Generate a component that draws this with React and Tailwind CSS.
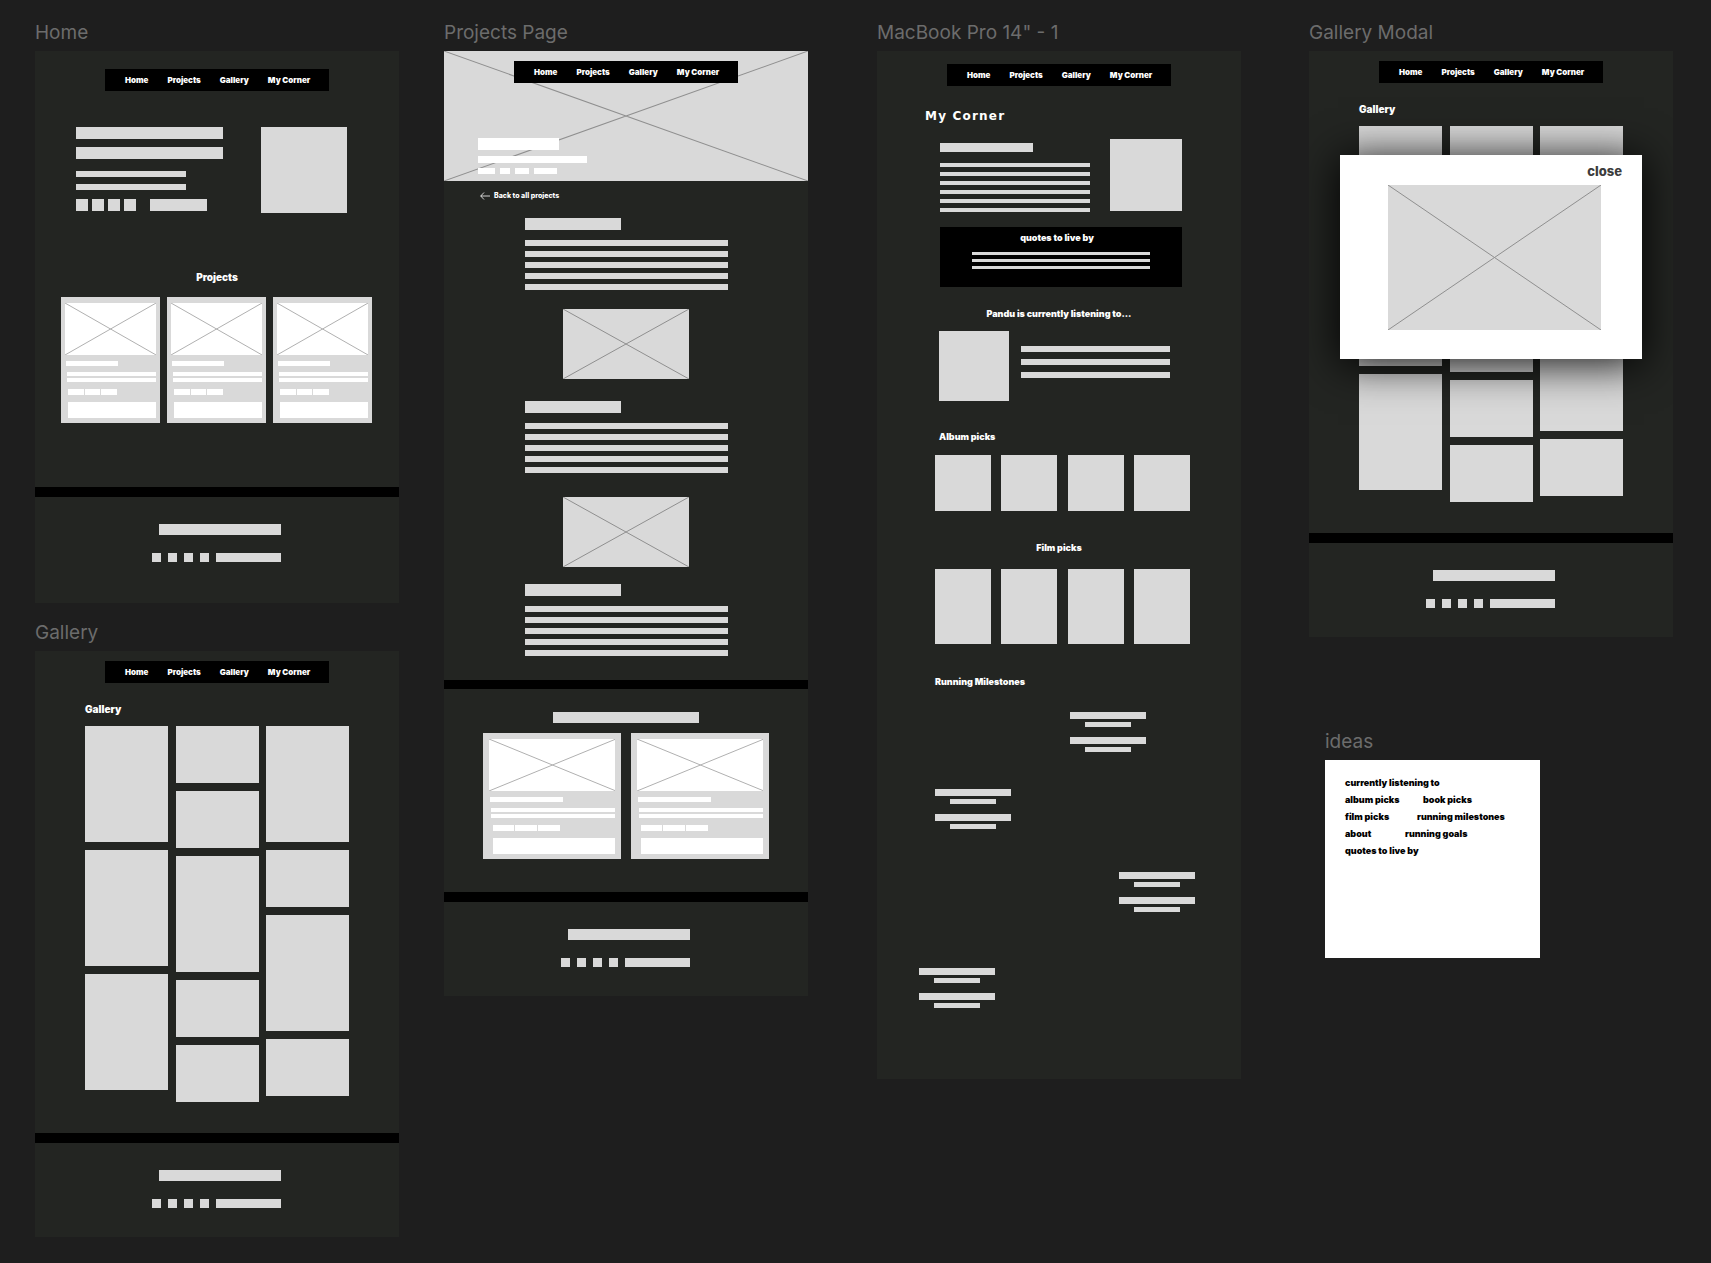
import React from 'react';

const navLinks = ['Home', 'Projects', 'Gallery', 'My Corner'];

const galleryColumns = [
  ['tall', 'tall', 'tall'],
  ['short', 'short', 'tall', 'short', 'short'],
  ['tall', 'short', 'tall', 'short'],
];

const ideaRows = [
  { first: 'currently listening to' },
  { first: 'album picks', second: 'book picks', width: 'w-[78px]' },
  { first: 'film picks', second: 'running milestones', width: 'w-[72px]' },
  { first: 'about', second: 'running goals', width: 'w-[60px]' },
  { first: 'quotes to live by' },
];

const Bar = ({ className }) => <div className={`bg-[#d9d9d9] ${className}`} />;

const Lines = ({ count, className, lineClass }) => (
  <div className={`flex flex-col ${className}`}>
    {Array.from({ length: count }, (_, i) => (
      <Bar key={i} className={lineClass} />
    ))}
  </div>
);

const Cross = ({ className }) => (
  <svg className={`block size-full ${className}`} viewBox="0 0 100 100" preserveAspectRatio="none" fill="none">
    <path d="M0 0L100 100M100 0L0 100" stroke="currentColor" strokeWidth="1" vectorEffect="non-scaling-stroke" />
  </svg>
);

const Label = ({ children }) => (
  <p className="mb-px font-['Inter'] text-[19px] leading-[34px] whitespace-nowrap text-[#6c6c6c]">{children}</p>
);

const Heading = ({ children, className = 'text-[9px]' }) => (
  <h2 className={`leading-4 font-black text-white ${className}`}>{children}</h2>
);

const Nav = () => (
  <nav className="relative mx-auto flex h-[22px] w-[224px] items-center gap-[19px] bg-black pl-5 text-[8px] leading-4 font-black whitespace-nowrap text-white">
    {navLinks.map((link) => (
      <a key={link} href="#">
        {link}
      </a>
    ))}
  </nav>
);

const ProjectCard = ({ className }) => (
  <div className={`flex h-[126px] flex-col bg-[#d9d9d9] pt-[6px] ${className}`}>
    <div className="mx-[4%] h-[52px] bg-white">
      <Cross className="text-[#b0b0b0]" />
    </div>
    <div className="mt-[6px] ml-[5%] h-[5px] w-[53%] bg-white" />
    <div className="mt-[6px] mr-[4%] ml-[6%] h-1 bg-white" />
    <div className="mt-[2px] mr-[4%] ml-[6%] h-1 bg-white" />
    <div className="mt-[7px] ml-[7%] flex gap-px">
      <div className="h-[6px] w-[17%] bg-white" />
      <div className="h-[6px] w-[17%] bg-white" />
      <div className="h-[6px] w-[17%] bg-white" />
    </div>
    <div className="mt-[7px] mr-[4%] ml-[7%] h-4 bg-white" />
  </div>
);

const Footer = () => (
  <footer className="border-t-10 border-black pt-[27px] pb-[29px]">
    <div className="mx-auto w-[130px] pr-px">
      <Bar className="ml-[7px] h-[11px]" />
      <div className="mt-[18px] flex gap-[7px]">
        <Bar className="size-[9px]" />
        <Bar className="size-[9px]" />
        <Bar className="size-[9px]" />
        <Bar className="size-[9px]" />
        <Bar className="h-[9px] flex-1" />
      </div>
    </div>
  </footer>
);

const HomeFrame = () => (
  <section>
    <Label>Home</Label>
    <div className="bg-[#232522] pt-[18px] pb-3">
      <Nav />
      <div className="mx-auto mt-9 flex w-[282px] justify-between pr-[11px]">
        <div>
          <Bar className="h-3 w-[147px]" />
          <Bar className="mt-2 h-3 w-[147px]" />
          <Bar className="mt-3 h-[6px] w-[110px]" />
          <Bar className="mt-[7px] h-[6px] w-[110px]" />
          <div className="mt-[9px] flex justify-between pr-4">
            <div className="flex gap-1">
              <Bar className="size-3" />
              <Bar className="size-3" />
              <Bar className="size-3" />
              <Bar className="size-3" />
            </div>
            <Bar className="h-3 w-[57px]" />
          </div>
        </div>
        <Bar className="size-[86px]" />
      </div>
      <Heading className="mt-14 text-center text-[10px]">Projects</Heading>
      <div className="mt-3 flex justify-center gap-[7px] pr-px pb-16">
        <ProjectCard className="w-[99px]" />
        <ProjectCard className="w-[99px]" />
        <ProjectCard className="w-[99px]" />
      </div>
      <Footer />
    </div>
  </section>
);

const GalleryPage = () => (
  <div className="bg-[#232522] pt-[10px]">
    <Nav />
    <div className="mx-auto w-[264px] pt-[18px] pb-[31px]">
      <Heading className="text-[10px]">Gallery</Heading>
      <div className="mt-[9px] flex justify-between">
        {galleryColumns.map((column, i) => (
          <div key={i} className="flex w-[83px] flex-col gap-2">
            {column.map((size, j) => (
              <Bar key={j} className={size === 'tall' ? 'h-[116px]' : 'h-[57px]'} />
            ))}
          </div>
        ))}
      </div>
    </div>
    <Footer />
  </div>
);

const GalleryFrame = () => (
  <section>
    <Label>Gallery</Label>
    <GalleryPage />
  </section>
);

const Article = ({ className }) => (
  <div className={`mx-auto w-[203px] ${className}`}>
    <Bar className="h-3 w-24" />
    <Lines count={5} className="mt-[10px] gap-[5px]" lineClass="h-[6px]" />
  </div>
);

const ArticleImage = ({ className }) => (
  <div className={`mx-auto h-[70px] w-[126px] bg-[#d9d9d9] ${className}`}>
    <Cross className="text-[#8f8f8f]" />
  </div>
);

const ProjectsFrame = () => (
  <section>
    <Label>Projects Page</Label>
    <div className="bg-[#232522]">
      <header className="relative bg-[#d9d9d9] pt-[10px] pb-[7px]">
        <div className="absolute inset-0">
          <Cross className="text-[#8f8f8f]" />
        </div>
        <Nav />
        <div className="relative mt-[55px] ml-[34px]">
          <div className="h-3 w-[81px] bg-white" />
          <div className="mt-[6px] h-[7px] w-[109px] bg-white" />
          <div className="mt-[5px] flex gap-[5px]">
            <div className="h-[6px] w-[17px] bg-white" />
            <div className="h-[6px] w-[10px] bg-white" />
            <div className="h-[6px] w-[14px] bg-white" />
            <div className="h-[6px] w-[23px] bg-white" />
          </div>
        </div>
      </header>
      <a href="#" className="mt-[7px] ml-9 flex items-center gap-1 text-[7px] leading-4 font-extrabold text-white">
        <svg className="h-2 w-[10px]" viewBox="0 0 10 8" fill="none">
          <path d="M10 4H0.7M4 0.5L0.7 4L4 7.5" stroke="currentColor" strokeWidth="0.8" />
        </svg>
        Back to all projects
      </a>
      <Article className="mt-[14px]" />
      <ArticleImage className="mt-[19px]" />
      <Article className="mt-[22px]" />
      <ArticleImage className="mt-6" />
      <Article className="mt-[17px]" />
      <div className="mt-6 border-t-9 border-black pt-[23px] pb-[33px]">
        <Bar className="mx-auto h-[11px] w-[146px]" />
        <div className="mt-[10px] flex justify-center gap-[10px]">
          <ProjectCard className="w-[138px]" />
          <ProjectCard className="w-[138px]" />
        </div>
      </div>
      <Footer />
    </div>
  </section>
);

const Milestone = ({ className }) => (
  <li className={`flex w-[76px] flex-col items-center ${className}`}>
    <Bar className="h-[7px] w-full" />
    <Bar className="mt-[3px] h-[5px] w-[46px]" />
    <Bar className="mt-[10px] h-[7px] w-full" />
    <Bar className="mt-[3px] h-[5px] w-[46px]" />
  </li>
);

const Picks = ({ className, itemClass }) => (
  <div className={`ml-[58px] flex w-[255px] justify-between ${className}`}>
    {[1, 2, 3, 4].map((n) => (
      <Bar key={n} className={`w-14 ${itemClass}`} />
    ))}
  </div>
);

const CornerFrame = () => (
  <section>
    <Label>MacBook Pro 14" - 1</Label>
    <div className="bg-[#232522] pt-[13px] pb-[71px]">
      <Nav />
      <h1 className="mt-[22px] ml-12 font-['DejaVu_Sans'] text-[12px] leading-4 font-bold tracking-widest text-white">
        My Corner
      </h1>
      <div className="mt-[15px] ml-[63px] w-[242px]">
        <div className="flex justify-between">
          <div className="w-[150px] pt-1">
            <Bar className="h-[9px] w-[93px]" />
            <Lines count={6} className="mt-[11px] gap-[5px]" lineClass="h-1" />
          </div>
          <Bar className="size-[72px]" />
        </div>
        <div className="mt-[15px] bg-black pt-[3px] pb-[18px]">
          <Heading className="pr-2 text-center text-[9px]">quotes to live by</Heading>
          <Lines count={3} className="mx-auto mt-[6px] w-[178px] gap-1" lineClass="h-[3px]" />
        </div>
      </div>
      <Heading className="mt-[19px] text-center text-[9px]">Pandu is currently listening to...</Heading>
      <div className="mt-[9px] ml-[62px] flex gap-3">
        <Bar className="size-[70px]" />
        <Lines count={3} className="w-[149px] gap-[7px] pt-[15px]" lineClass="h-[6px]" />
      </div>
      <Heading className="mt-7 ml-[62px] text-[9px]">Album picks</Heading>
      <Picks className="mt-[10px]" itemClass="h-14" />
      <Heading className="mt-[29px] text-center text-[9px]">Film picks</Heading>
      <Picks className="mt-[13px]" itemClass="h-[75px]" />
      <Heading className="mt-[30px] ml-[58px] text-[9px]">Running Milestones</Heading>
      <ul className="mt-[22px]">
        <Milestone className="ml-[193px]" />
        <Milestone className="mt-[37px] ml-[58px]" />
        <Milestone className="mt-[43px] ml-[242px]" />
        <Milestone className="mt-14 ml-[42px]" />
      </ul>
    </div>
  </section>
);

const ModalFrame = () => (
  <section>
    <Label>Gallery Modal</Label>
    <div className="relative overflow-hidden">
      <GalleryPage />
      <div
        role="dialog"
        aria-label="Gallery image"
        className="absolute inset-x-0 top-[104px] mx-auto flex h-[204px] w-[302px] flex-col bg-white pt-2 shadow-[0_4px_40px_2px_rgba(0,0,0,0.9)]"
      >
        <button type="button" className="mr-5 self-end text-[13px] leading-4 font-extrabold text-[#3c3c3c]">
          close
        </button>
        <div className="mt-[6px] ml-12 h-[145px] w-[213px] bg-[#d9d9d9]">
          <Cross className="text-[#8f8f8f]" />
        </div>
      </div>
    </div>
  </section>
);

const IdeasFrame = () => (
  <section className="ml-4 pt-[88px]">
    <Label>ideas</Label>
    <ul className="h-[198px] w-[215px] bg-white pt-[14px] pl-5 text-[9px] leading-[17px] font-black whitespace-nowrap text-black">
      {ideaRows.map((row) => (
        <li key={row.first} className="flex">
          <span className={row.width}>{row.first}</span>
          {row.second && <span>{row.second}</span>}
        </li>
      ))}
    </ul>
  </section>
);

const App = () => (
  <main className="flex min-h-screen bg-[#1e1e1e] pt-4 pr-[38px] pb-6 pl-[35px] font-['Inter',sans-serif]">
    <div className="flex min-w-0 flex-1 flex-col gap-[13px]">
      <HomeFrame />
      <GalleryFrame />
    </div>
    <div className="ml-[45px] min-w-0 flex-1">
      <ProjectsFrame />
    </div>
    <div className="ml-[69px] min-w-0 flex-1">
      <CornerFrame />
    </div>
    <div className="ml-[68px] min-w-0 flex-1">
      <ModalFrame />
      <IdeasFrame />
    </div>
  </main>
);

export default App;
